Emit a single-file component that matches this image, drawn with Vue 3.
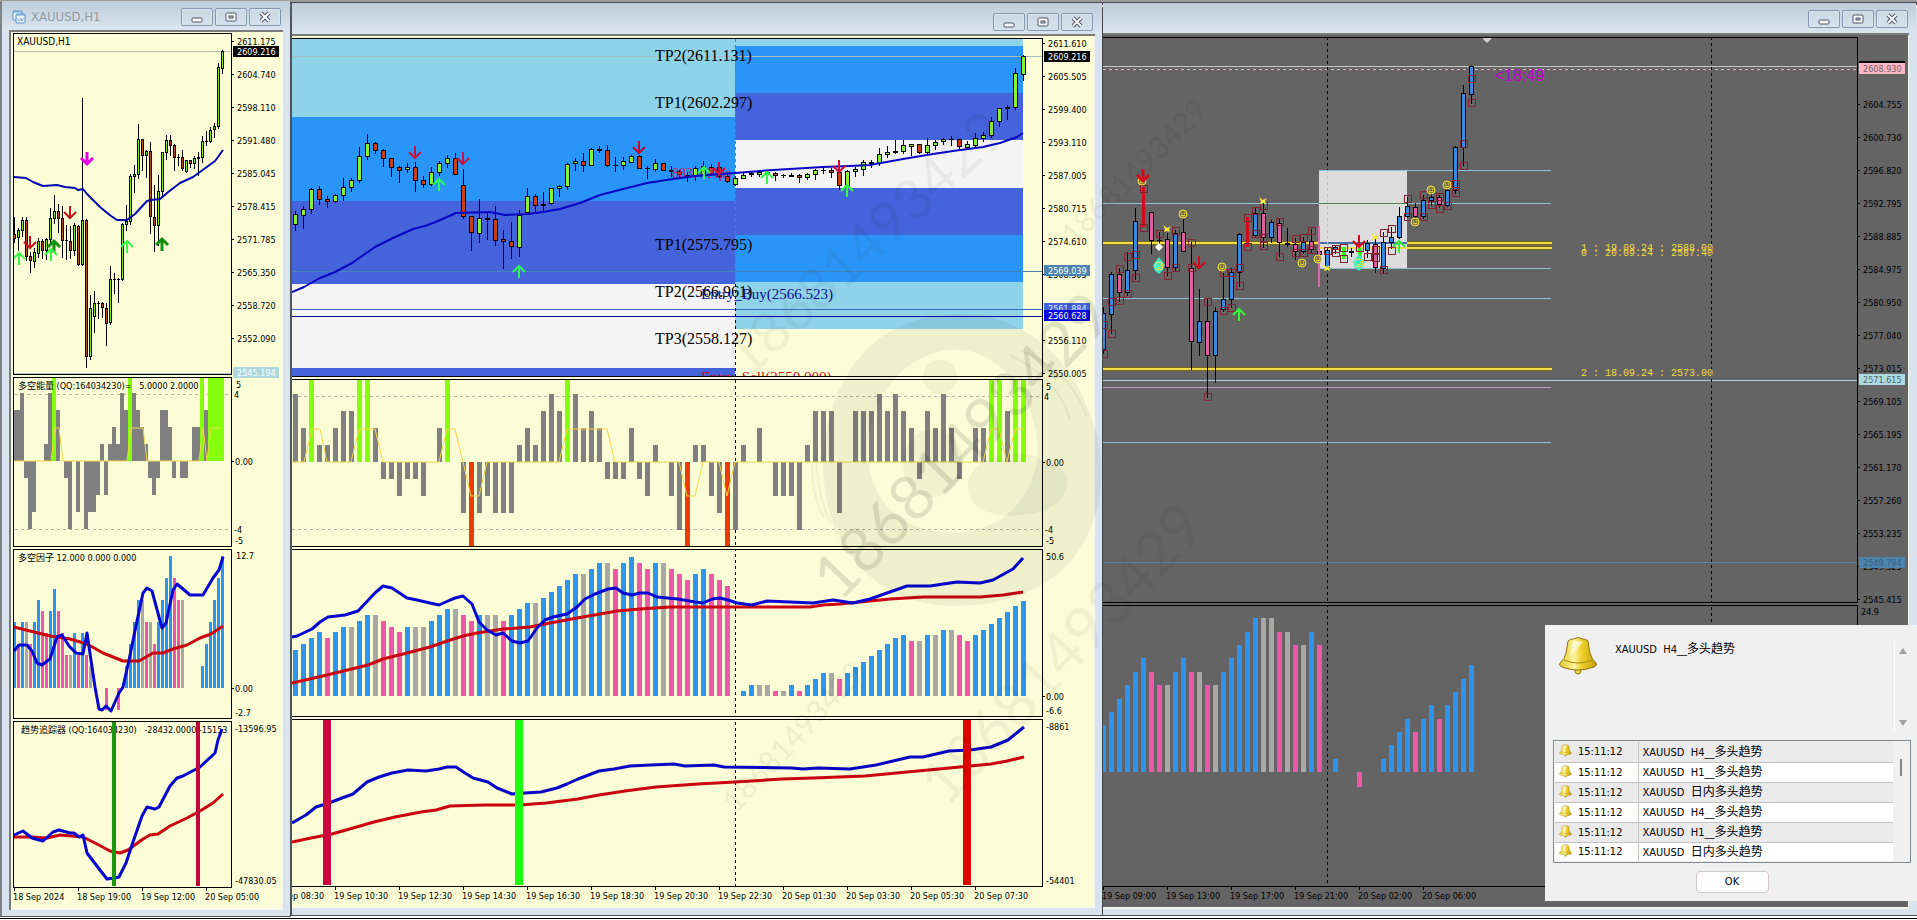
<script setup>
const palette = { b: '#2f94ee', p: '#ee58ab', g: '#a8a8a6' }

// "high top bottom low kind" per candle, separated by "|"
const candles = (text, x0, step) =>
  text.split('|').map((entry, i) => {
    const [h, t, b, l, k] = entry.trim().split(' ')
    return { x: x0 + i * step, h: +h, t: +t, b: +b, l: +l, k }
  }).filter((c) => c.k !== 'n')

const momentum = (text, x0, step, width, zero, unit, top, bottom) =>
  text.split(' ').map((v, i) => {
    const x = x0 + i * step - Math.floor(width / 2)
    if (v === 'G') return { x, y: top, w: width, h: zero - top, fill: '#86ff0c' }
    if (v === 'R') return { x, y: zero, w: width, h: bottom - zero, fill: '#ee3b06' }
    const h = Math.round(Math.abs(+v) * unit)
    return { x, y: +v > 0 ? zero - h : zero, w: width, h, fill: '#808080' }
  }).filter((b) => b.h)

const histogram = (text, x0, step, width, zero, unit) =>
  text.split(' ').map((entry, i) => {
    const v = Math.round(+entry.slice(1) * unit)
    return { x: x0 + i * step - Math.floor(width / 2), y: v > 0 ? zero - v : zero, w: width, h: Math.abs(v), fill: palette[entry[0]] }
  }).filter((b) => b.h)

const ladder = (x, first, gap, values) => values.map((text, i) => ({ x, y: first + i * gap, text, tick: true }))
const times = (x, labels) => labels.map((text, i) => ({ x: x + i * 64, text }))

const hourly = {
  id: 'h1', title: 'XAUUSD,H1', view: '9 30 274 880', paper: '#fafdd5', dark: false,
  inner: { x: 11, y: 32, w: 271, h: 876 }, plot: { x: 13, right: 231 },
  panes: [[33, 374], [377, 546], [549, 718], [721, 887]],
  fills: [],
  back: [
    { d: 'M14 51.5H231', c: '#b9bcae' }, { d: 'M14 373.5H231', c: '#b8cfd0' },
    { d: 'M15 394.5H231M15 529.5H231', c: '#b4b4a4', dash: '3 3' },
  ],
  candleWidth: 3, up: '#7ee832', down: '#b94a1c',
  candles: candles('217 234 238 242 r|228 230 237 250 u|217 220 230 236 u|217 220 256 260 r|252 256 260 272 r|248 252 261 267 u|238 241 253 257 u|239 241 250 258 r|238 239 250 259 u|208 218 239 242 u|195 211 218 223 u|204 211 218 232 r|206 218 240 257 r|225 240 240 259 d|226 241 250 258 r|223 225 250 255 u|225 226 264 265 r|98 220 264 265 u|219 220 356 367 r|295 308 356 359 u|291 303 316 332 u|301 303 303 318 d|302 303 307 317 r|303 308 323 345 r|266 279 322 324 u|273 279 279 293 d|278 279 279 302 d|223 224 279 280 u|205 221 224 230 u|174 176 221 224 u|165 174 176 192 u|124 139 174 178 u|139 139 155 170 r|150 151 155 177 u|142 151 216 233 r|185 217 225 251 r|175 191 225 245 u|152 152 191 195 u|135 140 152 159 u|135 140 145 155 r|144 145 157 170 r|154 157 157 165 d|150 157 168 170 r|160 160 171 172 u|160 160 163 167 r|156 158 163 168 u|152 157 158 175 d|136 141 157 162 u|131 141 141 145 d|127 130 141 142 u|123 126 129 137 u|63 67 126 128 u|50 51 68 73 u', 14, 4),
  bars: [
    ...momentum('3 3 4 -1 -4 -3 0 0 1 4 G 3 0 -1 -4 0 -3 0 -4 -3 -3 -2 1 -2 1 2 1 4 3 G 4 3 2 1 -1 -2 -1 3 3 2 -1 0 -1 -1 0 2 2 G 3 G G G G', 14, 4, 4, 461, 17, 378, 546),
    ...histogram('b6 p4 b6 g6 p4 b6 b8 p7 p5 b7 b9 p7 p5 p3 g3 b5 p3 b5 p3 g2 b0 b0 b0 p-2 b0 b0 p-2 b0 b2 b4 b6 b8 g8 p6 g6 p4 b6 b8 b10 b12 p10 p8 g8 b0 b0 b0 b0 b2 b4 b6 b8 b10 b12', 14, 4, 3, 688, 11),
  ],
  lines: [
    { w: 2, c: '#0404b4', p: '14,177 26,178 33,182 43,186 57,185 65,187 75,188 78,190 83,189 87,194 100,207 111,216 117,220 127,220 135,214 147,201 151,200 160,199 167,193 180,183 193,177 200,172 215,161 218,157 223,150' },
    { w: 1, c: '#f2d646', p: '14,461 51,461 55,428 59,428 63,461 127,461 131,428 143,428 147,461 199,461 203,428 207,461 211,428 222,428' },
    { w: 3, c: '#cb0210', p: '14,627 30,631 50,636 70,639 87,644 103,653 123,661 139,661 153,653 163,653 173,649 187,645 200,638 211,634 223,626' },
    { w: 3, c: '#0606d0', p: '14,651 19,645 27,645 32,651 37,663 42,665 50,659 57,637 62,635 69,646 76,653 83,654 87,633 92,667 95,687 99,709 102,710 106,706 111,711 119,693 123,687 129,660 137,621 143,593 147,588 152,591 162,628 166,623 173,590 177,584 183,589 190,595 203,595 213,578 219,570 223,557' },
    { w: 3, c: '#cb0210', p: '14,837 30,837 47,838 60,835 83,837 97,844 110,851 120,853 128,850 143,839 150,835 158,834 170,826 187,818 200,811 213,803 223,794' },
    { w: 3, c: '#0606d0', p: '14,835 23,831 32,838 43,841 53,832 59,830 70,833 74,833 79,837 83,835 87,853 100,870 107,879 115,878 119,877 126,863 133,842 142,816 147,807 155,809 159,807 170,786 177,778 183,776 200,767 215,753 218,740 222,729' },
  ],
  front: [],
  posts: [{ x: 112, y: 721, w: 4, h: 165, fill: '#18960e' }, { x: 196, y: 721, w: 4, h: 165, fill: '#c2063c' }],
  squares: [], smiles: [], wings: [],
  arrows: [
    { x: 87, y: 158, dir: 'down', c: '#e800e8', w: 3 }, { x: 70, y: 212, dir: 'down', c: '#c4121c', w: 2 },
    { x: 30, y: 242, dir: 'down', c: '#c4121c', w: 2 }, { x: 19, y: 259, dir: 'up', c: '#3cf646', w: 2 },
    { x: 54, y: 247, dir: 'up', c: '#149010', w: 3 }, { x: 51, y: 255, dir: 'up', c: '#3cf646', w: 2 },
    { x: 127, y: 247, dir: 'up', c: '#3cf646', w: 2 }, { x: 162, y: 245, dir: 'up', c: '#149010', w: 3 },
  ],
  notes: [
    { x: 17, y: 45, text: 'XAUUSD,H1', cls: 'tiny-wide' },
    { x: 18, y: 389, text: '多空能量 (QQ:164034230)=\u00a0\u00a0 5.0000 2.0000', cls: 'tiny' },
    { x: 18, y: 561, text: '多空因子 12.000 0.000 0.000', cls: 'tiny' },
    { x: 21, y: 733, text: '趋势追踪器 (QQ:164034230)\u00a0\u00a0 -28432.0000 -15153', cls: 'tiny' },
  ],
  scale: [
    ...ladder(237, 41, 33, ['2611.175']),
    ...ladder(237, 74, 33, ['2604.740', '2598.110', '2591.480', '2585.045', '2578.415', '2571.785', '2565.350', '2558.720', '2552.090']),
    { x: 236, y: 384, text: '5' }, { x: 234, y: 394, text: '4' }, { x: 235, y: 461, text: '0.00', tick: true },
    { x: 234, y: 529, text: '-4' }, { x: 235, y: 540, text: '-5' }, { x: 236, y: 555, text: '12.7' },
    { x: 235, y: 688, text: '0.00', tick: true }, { x: 235, y: 712, text: '-2.7' },
    { x: 235, y: 728, text: '-13596.95' }, { x: 235, y: 880, text: '-47830.05' },
  ],
  tags: [{ x: 233, y: 46, text: '2609.216', bg: '#000', c: '#fff' }, { x: 233, y: 367, text: '2545.194', bg: '#aed8df', c: '#f6fdf8' }],
  timeline: times(13, ['18 Sep 2024', '18 Sep 19:00', '19 Sep 12:00', '20 Sep 05:00']), timeY: 900,
}

const sky = '#8fd3e8', azure = '#2995f8', royal = '#4563da', snow = '#f4f4f4'
const halfHour = {
  id: 'm30', title: '', view: '292 34 803 874', paper: '#fafdd5', dark: false,
  inner: { x: 290, y: 36, w: 804, h: 871 }, plot: { x: 286, right: 1042 },
  panes: [[38, 376], [379, 546], [549, 716], [719, 886]],
  fills: [
    [292, 39, 443, 78, sky], [292, 117, 443, 84, azure], [292, 201, 443, 83, royal], [292, 284, 443, 84, snow], [292, 368, 443, 8, royal],
    [735, 39, 288, 7, sky], [735, 46, 288, 47, azure], [735, 93, 288, 47, royal], [735, 140, 288, 48, snow],
    [735, 188, 288, 47, royal], [735, 235, 288, 47, azure], [735, 282, 288, 47, sky],
  ],
  back: [
    { d: 'M292 56.5H1042', c: '#a9bcc4' }, { d: 'M292 271.5H1042', c: '#4682b4' },
    { d: 'M292 309.5H1042', c: '#3d66bc' }, { d: 'M292 316.5H1042', c: '#0a0a9c' },
    { d: 'M735.5 39V284', c: '#77777c', dash: '3 3' }, { d: 'M735.5 284V886', c: '#000', dash: '3 3' },
    { d: 'M292 396.5H1042M292 529.5H1042', c: '#b4b4a4', dash: '3 3' },
  ],
  candleWidth: 5, up: '#86f436', down: '#cb3e14',
  candles: candles('211 214 224 230 u|206 209 215 228 u|188 189 209 213 u|186 189 199 204 r|196 199 201 207 r|194 195 201 202 u|178 187 195 200 u|178 180 187 191 u|147 156 180 182 u|134 143 156 159 u|142 143 150 153 r|149 150 158 166 r|158 158 167 176 r|166 167 170 182 r|163 167 169 172 u|162 167 180 191 r|176 180 184 187 r|167 172 184 185 u|161 163 172 175 u|155 158 163 167 u|153 158 174 174 r|169 185 216 218 r|216 216 232 250 r|199 218 233 242 u|213 218 219 239 d|206 219 240 245 r|230 239 241 268 r|222 241 246 258 r|210 215 247 256 u|188 196 212 213 u|194 196 205 211 r|192 204 205 211 d|188 188 203 204 u|185 186 188 196 u|163 164 186 189 u|158 161 163 170 u|153 161 165 171 r|148 149 165 165 u|146 149 150 152 d|145 150 165 166 r|157 165 165 171 d|157 161 165 169 u|155 156 162 162 u|155 156 168 168 r|166 168 168 178 d|159 163 169 171 u|163 163 170 170 r|166 170 171 176 d|170 171 174 176 r|172 175 177 181 r|166 168 175 180 u|161 166 174 176 u|164 167 173 175 r|165 167 176 177 r|174 176 181 182 r|176 178 184 185 u|173 175 178 178 u|172 173 174 176 d|170 172 174 176 u|171 172 174 175 u|172 173 175 180 r|174 175 175 177 d|173 175 176 176 d|174 175 177 182 r|173 174 177 179 u|169 170 174 179 u|168 170 170 173 d|168 170 172 177 r|171 172 185 189 r|170 171 187 190 u|167 169 171 176 u|160 162 169 175 u|160 162 163 167 d|148 154 163 165 u|146 152 154 157 u|140 151 152 153 d|140 145 151 153 u|144 144 146 155 u|144 144 152 153 r|138 145 152 154 u|140 142 145 149 u|138 139 141 144 u|136 139 139 145 d|139 139 146 148 r|141 144 147 148 u|133 138 145 146 u|132 135 138 141 u|117 121 135 137 u|108 108 121 126 u|105 107 108 119 d|68 73 107 109 u|55 56 74 80 u', 295, 8),
  bars: [
    ...momentum('4 2 G 1 1 2 3 3 G G 2 -1 -1 -2 -1 -1 -2 0 2 G 0 -3 R -3 -2 -3 -3 -3 1 2 1 3 4 3 G 4 2 3 2 -1 -1 -1 2 -1 -2 1 0 -2 -4 R 1 1 -2 -3 R -4 1 0 2 0 -2 -2 -2 -4 1 3 3 3 -3 0 3 3 3 4 3 4 3 2 -1 3 2 4 2 -1 0 2 2 G G 3 G G', 295, 8, 5, 462, 17, 379, 546),
    ...histogram('b46 b52 b58 b64 p58 b64 b69 g69 b75 b81 g81 p75 p69 p64 b69 g69 g69 b75 b81 b87 g87 p81 p75 b81 g81 g81 p75 b81 b87 b93 g93 b98 b104 b110 b116 b122 g122 b127 b133 g133 p127 b133 b139 p133 p127 b133 g133 p127 p122 p116 b122 b127 p122 p116 p110 b0 b5 b11 g11 g11 p5 g5 b11 p5 b11 b17 b23 g23 p17 b23 b29 b34 b40 b46 b52 b58 b61 p55 g55 b61 g61 b66 g66 p61 p55 b61 b66 b72 b78 b84 b90 b95', 295, 8, 5, 696, 1),
  ],
  lines: [
    { w: 2, c: '#0606c4', p: '292,292 304,287 320,278 335,272 352,263 375,247 393,238 413,229 425,226 438,221 456,213 490,212 505,215 528,214 543,212 560,209 580,203 600,195 623,189 647,183 673,179 695,176 735,173 773,170 823,167 850,166 870,165 903,159 933,154 953,151 983,147 1000,143 1017,137 1023,133' },
    { w: 1, c: '#f2d646', p: '292,462 304,462 312,429 320,429 327,462 351,462 359,429 375,429 383,462 439,462 447,429 455,429 463,462 471,496 479,496 487,462 559,462 567,429 607,429 615,462 679,462 687,496 695,496 703,462 719,462 727,496 735,462 983,462 991,429 999,429 1007,462 1015,429 1023,429' },
    { w: 3, c: '#cb0210', p: '292,683 327,675 368,665 383,659 407,653 430,647 447,641 463,636 477,633 503,629 530,627 550,623 577,618 600,614 617,611 640,609 670,607 727,607 810,607 823,605 840,604 860,602 890,599 923,597 980,597 1003,595 1023,592' },
    { w: 3, c: '#0606d0', p: '292,637 297,636 312,629 320,622 328,617 345,615 358,611 375,593 383,586 392,588 407,598 417,600 430,603 439,605 448,601 455,598 463,596 472,604 479,622 487,630 496,635 503,633 512,641 520,643 528,641 537,628 545,620 553,617 567,614 577,607 585,599 595,594 608,589 616,588 623,593 632,595 640,593 648,593 657,597 678,599 695,602 703,603 712,599 720,598 728,600 737,603 752,605 767,601 790,602 813,603 833,600 853,603 870,599 887,593 907,586 930,586 957,582 980,583 993,580 1013,569 1023,558' },
    { w: 3, c: '#cb0210', p: '292,842 311,838 332,834 353,828 374,822 395,817 421,812 436,810 450,806 484,805 520,805 546,803 578,799 599,795 625,791 656,787 698,784 735,782 782,779 813,778 865,776 907,772 939,769 970,766 991,764 1007,761 1024,757' },
    { w: 3, c: '#0606c4', p: '292,823 306,815 316,807 329,803 342,798 353,794 367,782 379,777 392,773 408,770 426,771 439,769 447,767 456,767 465,773 473,778 488,782 497,788 512,794 525,793 541,792 557,788 567,784 578,779 599,771 614,769 630,766 651,765 674,764 685,766 714,765 724,767 792,768 803,769 818,768 850,769 876,765 910,757 923,757 949,751 970,750 991,747 1008,740 1024,727' },
  ],
  front: [],
  posts: [{ x: 323, y: 719, w: 8, h: 166, fill: '#cc0640' }, { x: 515, y: 719, w: 8, h: 166, fill: '#18fc10' }, { x: 963, y: 719, w: 8, h: 166, fill: '#e00404' }],
  squares: [], smiles: [], wings: [],
  arrows: [
    { x: 415, y: 152, dir: 'down', c: '#c41444', w: 2 }, { x: 463, y: 158, dir: 'down', c: '#c41444', w: 2 },
    { x: 639, y: 147, dir: 'down', c: '#b80c30', w: 2 }, { x: 719, y: 168, dir: 'down', c: '#c80c40', w: 2 },
    { x: 839, y: 166, dir: 'down', c: '#d00c34', w: 2 }, { x: 439, y: 185, dir: 'up', c: '#2cf85c', w: 2 },
    { x: 519, y: 272, dir: 'up', c: '#2cf85c', w: 2 }, { x: 704, y: 173, dir: 'up', c: '#2cf85c', w: 2 },
    { x: 767, y: 178, dir: 'up', c: '#34f844', w: 2 }, { x: 847, y: 191, dir: 'up', c: '#34f844', w: 2 },
  ],
  notes: [
    { x: 655, y: 61, text: 'TP2(2611.131)', cls: 'level' }, { x: 655, y: 108, text: 'TP1(2602.297)', cls: 'level' },
    { x: 655, y: 250, text: 'TP1(2575.795)', cls: 'level' }, { x: 655, y: 297, text: 'TP2(2566.961)', cls: 'level' },
    { x: 655, y: 344, text: 'TP3(2558.127)', cls: 'level' }, { x: 701, y: 299, text: 'Entry_Buy(2566.523)', cls: 'level buy' },
    { x: 701, y: 382, text: 'Entry_Sell(2550.000)', cls: 'level sell', main: true }, { x: 672, y: 178, text: '883.4 Pips', cls: 'level pips' },
  ],
  scale: [
    ...ladder(1048, 43, 33, ['2611.610', '2605.505', '2599.400', '2593.110', '2587.005', '2580.715', '2574.610', '2568.505']),
    ...ladder(1048, 340, 33, ['2556.110', '2550.005']),
    { x: 1046, y: 386, text: '5' }, { x: 1044, y: 396, text: '4' }, { x: 1046, y: 462, text: '0.00', tick: true },
    { x: 1045, y: 529, text: '-4' }, { x: 1046, y: 540, text: '-5' }, { x: 1046, y: 556, text: '50.6' },
    { x: 1046, y: 696, text: '0.00', tick: true }, { x: 1046, y: 710, text: '-6.6' },
    { x: 1046, y: 726, text: '-8861' }, { x: 1046, y: 880, text: '-54401' },
  ],
  tags: [
    { x: 1044, y: 51, text: '2609.216', bg: '#000', c: '#fff' }, { x: 1044, y: 265, text: '2569.039', bg: '#4c84ae', c: '#fff' },
    { x: 1044, y: 303, text: '2561.884', bg: '#4563da', c: '#dfe6ff' }, { x: 1044, y: 310, text: '2560.628', bg: '#0808e0', c: '#fff' },
  ],
  timeline: times(270, ['19 Sep 08:30', '19 Sep 10:30', '19 Sep 12:30', '19 Sep 14:30', '19 Sep 16:30', '19 Sep 18:30', '19 Sep 20:30', '19 Sep 22:30', '20 Sep 01:30', '20 Sep 03:30', '20 Sep 05:30', '20 Sep 07:30']), timeY: 899,
}

const fractals = [[0, 324, 353], [1, 301, 333], [2, 268, 300], [3, 256, 293], [4, 254, 277], [5, 188, 227], [7, 233], [8, 275], [9, 230, 267], [11, 242, 267], [13, 301, 396], [15, 272, 310], [16, 272, 307], [17, 267, 285], [18, 217, 246], [19, 210, 233], [20, 205, 237, 245], [22, 221, 256], [24, 238, 252], [25, 237, 252], [26, 230, 249], [28, 250], [29, 248, 252], [30, 247, 258], [32, 247], [33, 256], [34, 249, 257], [35, 232, 269], [36, 228, 250], [38, 198, 216], [40, 194, 216], [41, 204], [42, 196, 208], [43, 205], [44, 183, 192], [45, 143, 165], [46, 78, 102]]

const fourHour = {
  id: 'dark', title: '', view: '1103 33 806 876', paper: '#646464', dark: true,
  inner: { x: 1100, y: 35, w: 808, h: 872 }, plot: { x: 1098, right: 1857 },
  panes: [[37, 602], [605, 886]],
  fills: [[1319, 170, 88, 98, '#dcdcdc']],
  back: [
    { d: 'M1103 66.5H1857', c: '#c4c8c6' }, { d: 'M1103 69.5H1857', c: '#f2b8c4', dash: '3 3' },
    { d: 'M1319 170.5H1551M1103 203.5H1319M1407 203.5H1551M1319 268.5H1551M1103 298.5H1551M1103 442.5H1551', c: '#8cc6d6' },
    { d: 'M1319 203.5H1407', c: '#4c8450' }, { d: 'M1103 380.5H1857', c: '#a4d4d8' }, { d: 'M1103 387.5H1551', c: '#c490cc' },
    { d: 'M1103 562.5H1857', c: '#5682a8' },
    { d: 'M1103 243H1319M1407 243H1552M1407 248H1552M1103 369H1552', c: '#75691c', w: 4 },
    { d: 'M1103 243H1319M1407 243H1552M1319 248H1552M1103 369H1552', c: '#f4dc44', w: 2 },
    { d: 'M1319 243H1407', c: '#4870a8', w: 2 },
    { d: 'M1327.5 37V170M1327.5 268V886M1711.5 37V886', c: '#000', dash: '3 3' },
    { d: 'M1327.5 170V268', c: '#bdbdbd', dash: '3 3' },
  ],
  candleWidth: 5, up: '#348be0', down: '#e25ca4',
  candles: candles('307 313 349 353 u|272 274 314 333 u|268 274 292 301 r|252 270 292 295 u|208 221 270 279 u|0 0 0 0 n|212 212 240 253 r|232 240 240 245 d|233 239 267 275 r|230 233 267 270 u|219 232 251 251 r|242 268 341 369 r|289 321 342 355 u|299 321 355 397 r|307 311 355 382 u|273 299 309 311 u|268 272 299 307 u|233 234 272 286 u|0 0 0 0 n|207 213 235 236 u|202 213 237 247 r|220 222 237 242 u|219 223 242 256 r|228 243 244 246 d|238 244 251 259 r|237 242 251 253 u|229 241 249 252 r|248 251 254 256 r|247 250 267 268 u|246 247 249 253 u|0 0 0 0 n|248 251 252 256 d|0 0 0 0 n|240 243 250 257 u|238 244 267 272 r|232 242 268 272 u|227 237 242 248 u|207 216 237 238 u|197 206 216 217 u|203 207 216 217 r|195 200 216 218 u|190 197 200 205 u|195 197 204 207 r|187 190 205 206 u|146 147 190 193 u|85 93 147 165 u|65 66 94 103 u', 1103, 8),
  bars: histogram('b47 b60 b73 b87 b100 b114 p100 p87 g87 b100 b114 p100 g100 p87 g87 b100 b114 b127 b140 b154 g154 g154 p140 g140 p127 g127 b140 p127 b0 b13 b0 b0 p-15 b0 b0 b13 b27 b40 b53 p40 b53 b67 p53 b67 b80 b93 b107', 1103, 8, 5, 772, 1),
  lines: [],
  front: [{ d: 'M1143.5 187V227M1247.5 217V247', c: '#d4081c', w: 3 }, { d: 'M1319 226V287', c: '#d868ac', w: 2 }, { d: 'M1343.5 247V259M1359.5 248V264', c: '#34f420', w: 4 }],
  posts: [],
  squares: fractals.flatMap(([k, ...ys]) => ys.map((y) => ({ x: 1099 + k * 8, y: y - 4 }))),
  smiles: [[1142, 181], [1159, 266, 1], [1183, 214], [1222, 267], [1302, 263], [1318, 259], [1431, 190], [1447, 185], [1415, 222], [1359, 263, 1]],
  wings: [[1167, 229], [1263, 201], [1327, 268], [1375, 237]],
  arrows: [
    { x: 1143, y: 175, dir: 'down', c: '#d4081c', w: 3 }, { x: 1199, y: 262, dir: 'down', c: '#c80c1c', w: 2 },
    { x: 1359, y: 241, dir: 'down', c: '#d4081c', w: 2 }, { x: 1239, y: 315, dir: 'up', c: '#34f834', w: 2 },
    { x: 1399, y: 247, dir: 'up', c: '#34e840', w: 2 },
  ],
  notes: [
    { x: 1495, y: 81, text: '<18:49', cls: 'countdown' },
    { x: 1581, y: 251, text: '1 : 19.09.24 : 2588.00', cls: 'ray' }, { x: 1581, y: 256, text: '0 : 20.09.24 : 2587.40', cls: 'ray' },
    { x: 1581, y: 376, text: '2 : 18.09.24 : 2573.00', cls: 'ray' },
  ],
  scale: [
    ...ladder(1863, 104, 33, ['2604.755', '2600.730', '2596.820', '2592.795', '2588.885', '2584.975', '2580.950', '2577.040', '2573.015', '2569.105', '2565.195', '2561.170', '2557.260', '2553.235', '2549.325', '2545.415']),
    { x: 1861, y: 611, text: '24.9' },
  ],
  tags: [
    { x: 1859, y: 61, text: '', bg: '#000', c: '#000' }, { x: 1859, y: 63, text: '2608.930', bg: '#ffb6c6', c: '#75606a' },
    { x: 1859, y: 374, text: '2571.615', bg: '#aedbe2', c: '#4c6468' }, { x: 1859, y: 557, text: '2549.794', bg: '#4c84ae', c: '#3c5c78' },
  ],
  timeline: times(1102, ['19 Sep 09:00', '19 Sep 13:00', '19 Sep 17:00', '19 Sep 21:00', '20 Sep 02:00', '20 Sep 06:00']), timeY: 899,
}

const charts = [hourly, halfHour, fourHour]
const arrowPath = { down: 'M0 -6V5M-6 0L0 6L6 0', up: 'M0 6V-5M-6 0L0 -6L6 0' }

const alerts = [['H4__', '多头趋势'], ['H1__', '多头趋势'], ['', '日内多头趋势'], ['H4__', '多头趋势'], ['H1__', '多头趋势'], ['', '日内多头趋势']]

const marks = [
  { x: 748, y: 380, a: -43, s: 56, o: 0.045 }, { x: 840, y: 603, a: -46, s: 62, o: 0.1 },
  { x: 947, y: 808, a: -47, s: 60, o: 0.045 }, { x: 1074, y: 247, a: -45, s: 30, o: 0.05 }, { x: 736, y: 814, a: -47, s: 30, o: 0.05 },
]
</script>

<template>
  <main class="desktop">
    <div class="windows">
      <section v-for="c in charts" :key="c.id" class="window" :class="c.id">
        <header class="titlebar">
          <h2 v-if="c.title" class="caption">
            <svg class="chart-icon" viewBox="0 0 14 14" aria-hidden="true">
              <rect x="1" y="1" width="9" height="9" rx="1" fill="#eef6fd" stroke="#5a94cc" />
              <path d="M1 2H10" stroke="#5a94cc" />
              <rect x="4" y="4" width="9" height="9" rx="1" fill="#eef6fd" stroke="#5a94cc" />
              <path d="M4 5H13" stroke="#5a94cc" />
              <path d="M5 8L7 11L9 8L10 11L12 8" fill="none" stroke="#7aa8d4" />
            </svg>
            {{ c.title }}
          </h2>
          <div class="controls">
            <button type="button" aria-label="Minimize">
              <svg viewBox="0 0 12 12"><rect x="1" y="7" width="10" height="4" rx="1" fill="#fff" stroke="#4c5468" /></svg>
            </button>
            <button type="button" aria-label="Maximize">
              <svg viewBox="0 0 12 12"><rect x="1" y="2" width="10" height="8" rx="1" fill="#fff" stroke="#4c5468" /><rect x="4" y="5" width="4" height="2" fill="#b8c8d8" stroke="#4c5468" /></svg>
            </button>
            <button type="button" aria-label="Close">
              <svg viewBox="0 0 12 12"><path d="M2 2L10 10M10 2L2 10" stroke="#4c5468" stroke-width="4" /><path d="M2 2L10 10M10 2L2 10" stroke="#fff" stroke-width="2" /></svg>
            </button>
          </div>
        </header>

        <svg class="chart" :viewBox="c.view" preserveAspectRatio="xMinYMin meet" role="img" :aria-label="'Price chart ' + c.title">
          <defs>
            <clipPath :id="'plot-' + c.id">
              <rect v-for="p in c.panes" :key="p[0]" :x="c.plot.x" :y="p[0]" :width="c.plot.right - c.plot.x" :height="p[1] - p[0]" />
            </clipPath>
            <clipPath :id="'main-' + c.id">
              <rect :x="c.plot.x" :y="c.panes[0][0]" :width="c.plot.right - c.plot.x" :height="c.panes[0][1] - c.panes[0][0]" />
            </clipPath>
          </defs>
          <rect :x="c.inner.x - 2" :y="c.inner.y - 2" :width="c.inner.w + 4" :height="c.inner.h + 4" fill="#f6f8f0" />
          <path :d="`M${c.inner.x - 2} ${c.inner.y + c.inner.h + 2}V${c.inner.y - 2}H${c.inner.x + c.inner.w + 1}V${c.inner.y}H${c.inner.x}V${c.inner.y + c.inner.h + 2}Z`" fill="#7c7c78" />
          <rect :x="c.inner.x" :y="c.inner.y" :width="c.inner.w" :height="c.inner.h" :fill="c.paper" />

          <g :clip-path="`url(#plot-${c.id})`">
            <g shape-rendering="crispEdges">
              <rect v-for="(f, i) in c.fills" :key="i" :x="f[0]" :y="f[1]" :width="f[2]" :height="f[3]" :fill="f[4]" />
              <path v-for="(l, i) in c.back" :key="i" :d="l.d" :stroke="l.c" :stroke-width="l.w || 1" :stroke-dasharray="l.dash" fill="none" />
              <rect v-for="(b, i) in c.bars" :key="i" :x="b.x" :y="b.y" :width="b.w" :height="b.h" :fill="b.fill" />
              <g v-for="(k, i) in c.candles" :key="i">
                <rect :x="k.x" :y="k.h" width="1" :height="k.l - k.h + 1" fill="#000" />
                <rect :x="k.x - (c.candleWidth - 1) / 2" :y="k.t" :width="c.candleWidth" :height="k.b - k.t + 1" fill="#000" />
                <rect v-if="k.k !== 'd' && k.b - k.t > 1" :x="k.x - (c.candleWidth - 3) / 2" :y="k.t + 1" :width="c.candleWidth - 2" :height="k.b - k.t - 1" :fill="k.k === 'u' ? c.up : c.down" />
              </g>
              <path v-for="(l, i) in c.front" :key="i" :d="l.d" :stroke="l.c" :stroke-width="l.w" />
            </g>
            <text v-for="(n, i) in c.notes" :key="i" :x="n.x" :y="n.y" :class="n.cls" :clip-path="n.main ? `url(#main-${c.id})` : undefined">{{ n.text }}</text>
            <polyline v-for="(l, i) in c.lines" :key="i" :points="l.p" fill="none" :stroke="l.c" :stroke-width="l.w" stroke-linejoin="round" />
            <rect v-for="(b, i) in c.posts" :key="i" :x="b.x" :y="b.y" :width="b.w" :height="b.h" :fill="b.fill" />
            <rect v-for="(s, i) in c.squares" :key="i" :x="s.x + 1" :y="s.y + 1" width="7" height="7" fill="none" stroke="#802434" shape-rendering="crispEdges" />
            <g v-for="(s, i) in c.smiles" :key="i" :transform="`translate(${s[0]} ${s[1]})`">
              <path v-if="s[2]" d="M0 -9L6 -1L3 5L0 8L-4 5L-6 -1Z" fill="#40e8c8" />
              <circle r="4" fill="#8c8028" :fill-opacity="s[2] ? 0 : 0.7" stroke="#f4e83c" />
              <path d="M-2 -1H-1M1 -1H2M-2 1Q0 3 2 1" fill="none" stroke="#f4e83c" />
            </g>
            <path v-for="(s, i) in c.wings" :key="i" :transform="`translate(${s[0]} ${s[1]})`" d="M-4 -4L0 -1L4 -3L2 0L3 3L0 2L-3 3L-2 0Z" fill="#f8ec34" />
            <path v-if="c.dark" d="M1159 243L1163 247L1159 251L1155 247Z" fill="#fff" />
            <path v-if="c.dark" d="M1482 38H1492L1487 43Z" fill="#d0d0d0" />
            <path v-for="(a, i) in c.arrows" :key="i" :transform="`translate(${a.x} ${a.y})`" :d="arrowPath[a.dir]" fill="none" :stroke="a.c" :stroke-width="a.w" />
          </g>

          <g shape-rendering="crispEdges">
            <path v-for="p in c.panes" :key="p[0]" :d="`M${c.plot.x + 0.5} ${p[0] + 0.5}H${c.plot.right + 0.5}V${p[1] + 0.5}H${c.plot.x + 0.5}Z`" fill="none" stroke="#000" />
            <rect v-for="(s, i) in c.scale.filter((s) => s.tick)" :key="i" :x="c.plot.right" :y="s.y" width="3" height="1" />
            <rect v-for="(t, i) in c.timeline" :key="i" :x="t.x + 1" :y="c.panes[c.panes.length - 1][1]" width="1" height="4" />
          </g>
          <text v-for="(s, i) in c.scale" :key="i" class="tiny" :x="s.x" :y="s.y + 4">{{ s.text }}</text>
          <text v-for="(t, i) in c.timeline" :key="i" class="tiny" :x="t.x" :y="c.timeY">{{ t.text }}</text>
          <g v-for="(t, i) in c.tags" :key="i">
            <rect :x="t.x" :y="t.y" width="46" height="11" :fill="t.bg" />
            <text v-if="t.text" class="tiny" :x="t.x + 4" :y="t.y + 9" :fill="t.c">{{ t.text }}</text>
          </g>
        </svg>
      </section>
    </div>
    <div class="edge"></div>

    <svg class="watermark" viewBox="0 0 1917 920" preserveAspectRatio="xMinYMin meet" aria-hidden="true">
      <path fill-rule="evenodd" opacity="0.05" d="M963 314C1010 314 1062 345 1084 400C1105 440 1110 500 1082 545C1060 585 1010 606 955 606C900 606 850 575 832 520C810 455 830 375 880 338C905 320 935 314 963 314ZM950 350C895 356 866 410 868 456C871 505 905 532 952 533C985 533 1025 515 1036 466C1046 420 1010 345 950 350Z" />
      <g opacity="0.04">
        <ellipse cx="933" cy="463" rx="30" ry="34" />
        <path d="M968 486C970 458 1010 444 1046 460C1080 470 1070 505 1038 512C1005 520 968 515 968 486Z" />
        <circle cx="940" cy="377" r="17" />
        <path d="M812 465Q812 495 824 518M817 450Q814 485 830 522M1010 355Q1060 380 1070 420M1020 350Q1070 370 1086 415" fill="none" stroke="#000" stroke-width="2" />
      </g>
      <text v-for="(m, i) in marks" :key="i" class="mark" :transform="`translate(${m.x} ${m.y}) rotate(${m.a})`" :font-size="m.s" :opacity="m.o">18681493429</text>
    </svg>

    <section class="alert" role="alertdialog" aria-labelledby="alert-message">
      <svg class="defs" aria-hidden="true">
        <defs>
          <linearGradient id="brass" x1="0" x2="1"><stop offset="0" stop-color="#e4c820" /><stop offset="0.4" stop-color="#fcf4a0" /><stop offset="0.6" stop-color="#ecd028" /><stop offset="1" stop-color="#c89c08" /></linearGradient>
          <symbol id="bell" viewBox="0 0 40 40">
            <circle cx="20" cy="35" r="3" fill="#f0d440" stroke="#8c7414" />
            <path d="M10 5Q12 3 15 3Q20 0 25 3Q28 3 30 5Q31 12 32 17Q34 24 38 27Q40 29 36 31Q20 37 4 31Q0 29 2 27Q7 23 8 17Z" fill="url(#brass)" stroke="#8c7414" stroke-width="1" />
            <path d="M6 24Q20 30 34 24" fill="none" stroke="#a8880c" />
            <path d="M15 6Q20 4 25 6L18 14L12 20Z" fill="#fff" opacity="0.6" />
          </symbol>
        </defs>
      </svg>
      <div class="message">
        <svg class="bell-large" aria-hidden="true"><use href="#bell" /></svg>
        <p id="alert-message">XAUUSD&nbsp; H4__<span class="han">多头趋势</span></p>
        <div class="scroller">
          <button type="button" aria-label="Scroll up"><svg viewBox="0 0 8 6"><path d="M0 6L4 0L8 6Z" fill="#a0a0a0" /></svg></button>
          <button type="button" aria-label="Scroll down"><svg viewBox="0 0 8 6"><path d="M0 0L4 6L8 0Z" fill="#a0a0a0" /></svg></button>
        </div>
      </div>
      <div class="log">
        <table>
          <tbody>
            <tr v-for="(a, i) in alerts" :key="i">
              <td class="time"><svg class="bell-small" aria-hidden="true"><use href="#bell" /></svg>15:11:12</td>
              <td>XAUUSD&nbsp; {{ a[0] }}<span class="han">{{ a[1] }}</span></td>
            </tr>
          </tbody>
        </table>
        <div class="track"><span class="thumb"></span></div>
      </div>
      <button type="button" class="ok">OK</button>
    </section>
  </main>
</template>

<style>
body {
  margin: 0;
  background: #fff;
}
</style>

<style scoped>
.desktop {
  position: relative;
  min-height: 100vh;
  overflow: hidden;
  background: linear-gradient(#9a9a9a 2px, #4c4c50 2px 5px, #fff 5px);
  font-family: "DejaVu Sans Condensed", "Noto Sans CJK SC", sans-serif;
}
.windows {
  display: grid;
  grid-template-columns: 291fr 812fr 814fr;
  align-items: start;
}
.window {
  box-sizing: border-box;
  min-width: 0;
  background: #d8e3ee;
  border-bottom: 1px solid #4c5058;
}
.h1 {
  margin-top: 1px;
  padding: 0 7px 6px 7px;
  border-left: 2px solid #808488;
  border-right: 1px solid #50545c;
  border-radius: 4px 6px 0 0;
}
.m30 {
  margin-top: 3px;
  padding: 0 7px 7px 0;
  border-left: 1px solid #50545c;
  border-right: 1px solid #404448;
  border-radius: 0 6px 0 0;
}
.dark {
  margin-top: 3px;
  padding: 0 8px 6px 0;
  border-radius: 0 6px 0 0;
}
.titlebar {
  box-sizing: border-box;
  display: flex;
  align-items: center;
  justify-content: space-between;
  height: 29px;
  margin-right: -7px;
  padding: 3px 9px 0 0;
  background: linear-gradient(#bfccda, #dae5ef);
}
.h1 .titlebar {
  margin-left: -7px;
  padding-left: 10px;
}
.m30 .titlebar {
  height: 31px;
  padding-top: 6px;
}
.dark .titlebar {
  height: 30px;
  padding: 2px 8px 0 0;
}
.caption {
  display: flex;
  align-items: center;
  gap: 5px;
  margin: 0;
  font-size: 13px;
  font-weight: 400;
  line-height: 18px;
  color: #929aa2;
}
.chart-icon {
  width: 14px;
  height: 14px;
}
.controls {
  display: flex;
  gap: 2px;
  margin-left: auto;
}
.controls button {
  display: flex;
  align-items: center;
  justify-content: center;
  width: 32px;
  height: 18px;
  padding: 0;
  border: 1px solid #8496b0;
  border-radius: 2px;
  background: linear-gradient(#ccd8e4, #d4e0ea);
  box-shadow: inset 0 0 0 1px #d8e4f0;
}
.controls svg {
  width: 12px;
  height: 12px;
}
.chart {
  display: block;
  width: 100%;
  height: auto;
  overflow: hidden;
}
.tiny {
  font-size: 9px;
}
.tiny-wide {
  font-size: 10px;
}
.level {
  font-family: "Liberation Serif", serif;
  font-size: 16px;
}
.buy {
  font-size: 15px;
  fill: #0c0c90;
}
.sell {
  font-size: 15px;
  fill: #c80c1c;
}
.pips {
  font-size: 14px;
  fill: #c01858;
}
.countdown {
  font-family: "Liberation Sans", sans-serif;
  font-size: 16px;
  fill: #c400cc;
}
.ray {
  font-family: "Liberation Mono", monospace;
  font-size: 10px;
  fill: #ecdc3c;
}
.edge {
  height: 1px;
  margin-top: 1px;
  background: #000;
}
.watermark {
  position: absolute;
  top: 0;
  left: 0;
  width: 100%;
  height: auto;
  pointer-events: none;
}
.mark {
  font-family: Lato, sans-serif;
  font-weight: 400;
}
.alert {
  position: absolute;
  right: 0;
  bottom: 19px;
  box-sizing: border-box;
  width: 372px;
  padding: 10px 6px 8px 8px;
  background: #f0f0f0;
  font-size: 11px;
  line-height: 16px;
  color: #000;
}
.han {
  font-size: 12px;
}
.defs {
  position: absolute;
  width: 0;
  height: 0;
}
.message {
  display: flex;
  height: 105px;
}
.bell-large {
  flex: none;
  width: 40px;
  height: 40px;
  margin: 1px 17px 0 5px;
}
.message p {
  flex: 1;
  margin: 6px 0 0;
}
.scroller {
  display: flex;
  flex-direction: column;
  justify-content: space-between;
  width: 16px;
  height: 90px;
  margin-top: 7px;
  border-left: 1px solid #fff;
}
.scroller button {
  display: flex;
  justify-content: center;
  padding: 6px 0;
  border: 0;
  background: none;
}
.scroller svg {
  width: 8px;
  height: 6px;
}
.log {
  display: flex;
  padding: 1px;
  border: 1px solid #828790;
  background: #f0f0f0;
}
table {
  flex: 1;
  border-collapse: collapse;
}
tr {
  background: #fff;
}
tr:nth-child(odd) {
  background: #eaeaea;
}
td {
  box-sizing: border-box;
  height: 20px;
  padding: 1px 4px 0;
  border-bottom: 1px solid #c4c4c4;
  white-space: nowrap;
}
tr:last-child td {
  height: 19px;
  border-bottom: 0;
}
.time {
  width: 83px;
  border-right: 1px solid #c4c4c4;
}
.bell-small {
  width: 13px;
  height: 13px;
  margin-right: 6px;
  vertical-align: -2px;
}
.track {
  display: flex;
  justify-content: center;
  width: 16px;
  padding-top: 17px;
}
.thumb {
  width: 2px;
  height: 17px;
  background: #858585;
}
.ok {
  display: block;
  width: 73px;
  height: 22px;
  margin: 8px auto 0;
  padding: 0;
  border: 1px solid #d0c8cc;
  border-radius: 4px;
  background: #fdfdfd;
  font: inherit;
}
</style>
